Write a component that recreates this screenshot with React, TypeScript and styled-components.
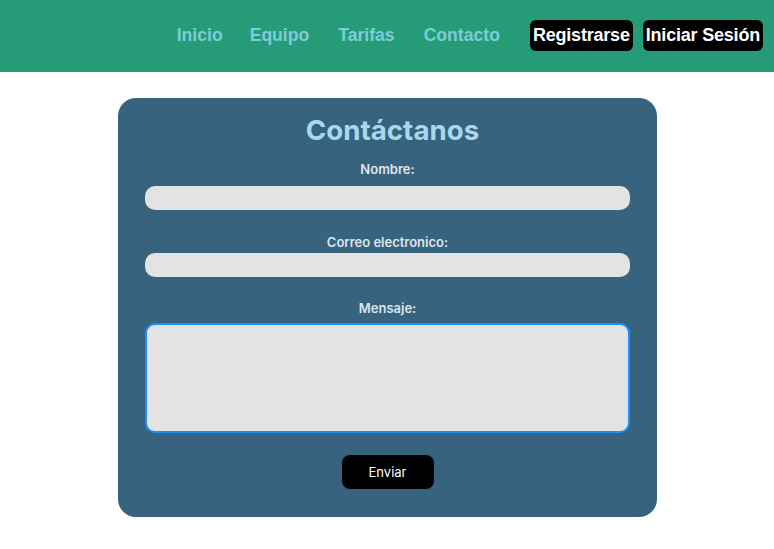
import styled, { createGlobalStyle } from 'styled-components'

const GlobalStyle = createGlobalStyle`
	html, body {
		margin: 0;
		padding: 0;
		background: #ffffff;
	}
	* {
		box-sizing: border-box;
	}
`

const navLinks = ['Inicio', 'Equipo', 'Tarifas', 'Contacto']

// label gap and space after each field, taken from the mockup
const fields = [
	{ id: 'nombre', label: 'Nombre:', labelGap: 8, after: 24 },
	{ id: 'correo', label: 'Correo electronico:', labelGap: 2, after: 23 },
]

const App = () => {
	return (
		<>
			<GlobalStyle />
			<Header>
				<Nav>
					{navLinks.map((link) => (
						<NavLink key={link} href="#">
							{link}
						</NavLink>
					))}
				</Nav>
				<AuthButtons>
					<AuthButton>Registrarse</AuthButton>
					<AuthButton>Iniciar Sesión</AuthButton>
				</AuthButtons>
			</Header>
			<Main>
				<Card>
					<Title>Contáctanos</Title>
					{fields.map((field) => (
						<Field key={field.id} $after={field.after}>
							<Label htmlFor={field.id} $gap={field.labelGap}>
								{field.label}
							</Label>
							<Input id={field.id} type="text" />
						</Field>
					))}
					<Field $after={22}>
						<Label htmlFor="mensaje" $gap={6}>
							Mensaje:
						</Label>
						<TextArea id="mensaje" />
					</Field>
					<SubmitButton type="button">Enviar</SubmitButton>
				</Card>
			</Main>
		</>
	)
}

const Header = styled.header`
	display: flex;
	align-items: center;
	justify-content: flex-end;
	height: 72px;
	padding: 0 11px 1px 0;
	background: #259b78;
`

const Nav = styled.nav`
	display: flex;
	align-items: center;
	gap: 27px;
	margin-right: 30px;
`

const NavLink = styled.a`
	font-family: 'Liberation Sans', Arial, sans-serif;
	font-weight: 700;
	font-size: 17.6px;
	color: #7ecbd9;
	text-decoration: none;
	&:nth-child(n + 3) {
		margin-left: 2px;
	}
`

const AuthButtons = styled.div`
	display: flex;
	gap: 10px;
`

const AuthButton = styled.button`
	height: 31px;
	padding: 0 3px;
	border: none;
	border-radius: 6px;
	background: #000000;
	color: #ffffff;
	font-family: 'Liberation Sans', Arial, sans-serif;
	font-weight: 700;
	font-size: 18px;
	letter-spacing: -0.2px;
	cursor: pointer;
`

const Main = styled.main`
	display: flex;
	justify-content: center;
	padding: 26px 0 0 1px;
`

const Card = styled.section`
	display: flex;
	flex-direction: column;
	align-items: center;
	width: 539px;
	height: 419px;
	padding: 15px 27px 0;
	border-radius: 18px;
	background: #37637e;
	font-family: Inter, 'Noto Sans', sans-serif;
`

const Title = styled.h1`
	margin: 0 0 14px 10px;
	font-size: 27.7px;
	line-height: 34px;
	font-weight: 700;
	color: #a7d9ec;
`

const Field = styled.div<{ $after: number }>`
	display: flex;
	flex-direction: column;
	align-items: center;
	width: 100%;
	margin-bottom: ${(props) => props.$after}px;
`

const Label = styled.label<{ $gap: number }>`
	margin-bottom: ${(props) => props.$gap}px;
	font-size: 13px;
	line-height: 17px;
	font-weight: 600;
	color: #dbe6ee;
`

const Input = styled.input`
	width: 100%;
	height: 24px;
	border: none;
	border-radius: 10px;
	background: #e3e3e3;
	outline: none;
`

const TextArea = styled.textarea`
	width: 100%;
	height: 110px;
	border: 2px solid #1a8fff;
	border-radius: 10px;
	background: #e3e3e3;
	outline: none;
	resize: none;
`

const SubmitButton = styled.button`
	width: 92px;
	height: 34px;
	margin-top: 0;
	border: none;
	border-radius: 8px;
	background: #000000;
	color: #ffffff;
	font-family: Inter, 'Noto Sans', sans-serif;
	font-size: 13px;
	cursor: pointer;
`

export default App
